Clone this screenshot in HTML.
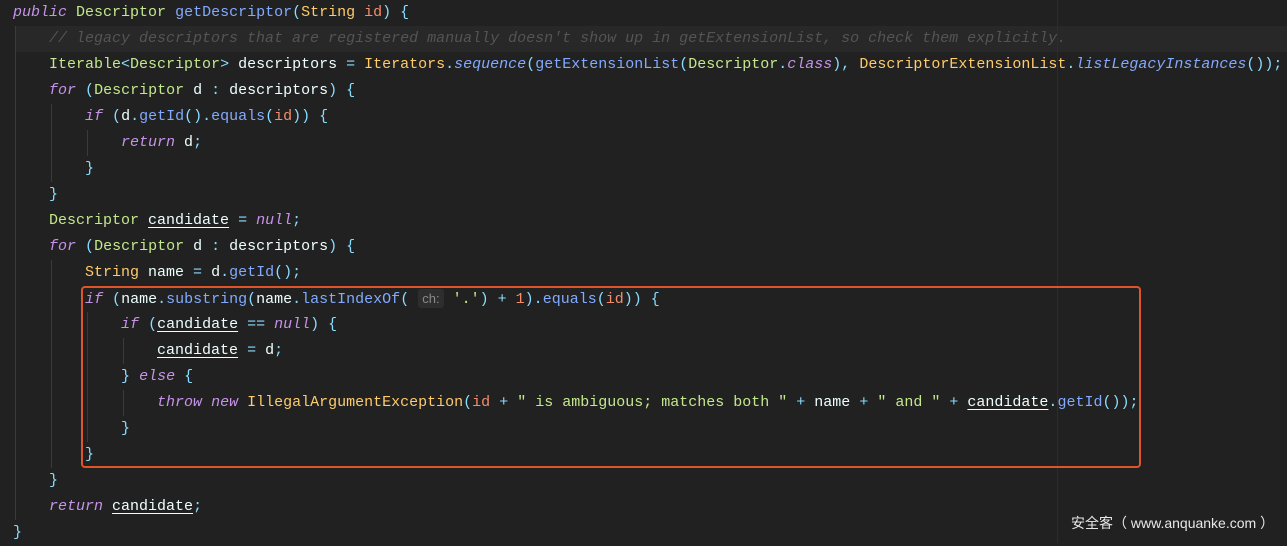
<!DOCTYPE html><html><head><meta charset="utf-8"><style>
body{margin:0;width:1287px;height:543px;background:#212121;overflow:hidden;position:relative;font-family:"Liberation Mono",monospace;font-size:15px;color:#eeffff}
.l{position:absolute;left:13px;height:26px;line-height:26px;white-space:pre}
.k{color:#c792ea;font-style:italic}.t{color:#c3e88d}.f{color:#82aaff}.p{color:#89ddff}.o{color:#f78c6c}.y{color:#ffcb6b}
.c{color:#545454;font-style:italic}.s{color:#c3e88d}.u{text-decoration:underline;text-underline-offset:3px}
.g{position:absolute;width:1px;background:#3a3a3a}
.hl{position:absolute;left:15px;top:26px;width:1272px;height:26px;background:#282828}
.box{position:absolute;left:81px;top:286px;width:1056px;height:178px;border:2px solid #e0542a;border-radius:4px}
.h{background:#2e2e2e;color:#8a8a8a;font-family:"Liberation Sans",sans-serif;font-size:13px;padding:2px 4px;border-radius:3px}
.wm{position:absolute;left:1071px;top:513px;color:#e8e8e8;font-family:"Liberation Sans","Noto Sans CJK SC",sans-serif;font-size:14px;white-space:pre}
</style></head><body>
<div class="hl"></div>
<div class="g" style="left:15px;top:26px;height:494px"></div>
<div class="g" style="left:51px;top:104px;height:78px"></div>
<div class="g" style="left:87px;top:130px;height:26px"></div>
<div class="g" style="left:51px;top:260px;height:208px"></div>
<div class="g" style="left:87px;top:312px;height:130px"></div>
<div class="g" style="left:123px;top:338px;height:26px"></div>
<div class="g" style="left:123px;top:390px;height:26px"></div>
<div class="g" style="left:1057px;top:0;height:543px;background:#2c2c2c"></div>
<div class="l" style="top:0"><span class="k">public</span> <span class="t">Descriptor</span> <span class="f">getDescriptor</span><span class="p">(</span><span class="y">String</span> <span class="o">id</span><span class="p">) {</span></div>
<div class="l" style="top:26px">    <span class="c">// legacy descriptors that are registered manually doesn't show up in getExtensionList, so check them explicitly.</span></div>
<div class="l" style="top:52px">    <span class="t">Iterable</span><span class="p">&lt;</span><span class="t">Descriptor</span><span class="p">&gt;</span> descriptors <span class="p">=</span> <span class="y">Iterators</span><span class="p">.</span><span class="f" style="font-style:italic">sequence</span><span class="p">(</span><span class="f">getExtensionList</span><span class="p">(</span><span class="t">Descriptor</span><span class="p">.</span><span class="k">class</span><span class="p">),</span> <span class="y">DescriptorExtensionList</span><span class="p">.</span><span class="f" style="font-style:italic">listLegacyInstances</span><span class="p">());</span></div>
<div class="l" style="top:78px">    <span class="k">for</span> <span class="p">(</span><span class="t">Descriptor</span> d <span class="p">:</span> descriptors<span class="p">) {</span></div>
<div class="l" style="top:104px">        <span class="k">if</span> <span class="p">(</span>d<span class="p">.</span><span class="f">getId</span><span class="p">().</span><span class="f">equals</span><span class="p">(</span><span class="o">id</span><span class="p">)) {</span></div>
<div class="l" style="top:130px">            <span class="k">return</span> d<span class="p">;</span></div>
<div class="l" style="top:156px">        <span class="p">}</span></div>
<div class="l" style="top:182px">    <span class="p">}</span></div>
<div class="l" style="top:208px">    <span class="t">Descriptor</span> <span class="u">candidate</span> <span class="p">=</span> <span class="k">null</span><span class="p">;</span></div>
<div class="l" style="top:234px">    <span class="k">for</span> <span class="p">(</span><span class="t">Descriptor</span> d <span class="p">:</span> descriptors<span class="p">) {</span></div>
<div class="l" style="top:260px">        <span class="y">String</span> name <span class="p">=</span> d<span class="p">.</span><span class="f">getId</span><span class="p">();</span></div>
<div class="l" style="top:286px">        <span class="k">if</span> <span class="p">(</span>name<span class="p">.</span><span class="f">substring</span><span class="p">(</span>name<span class="p">.</span><span class="f">lastIndexOf</span><span class="p">(</span> <span class="h">ch:</span> <span class="s">'.'</span><span class="p">)</span> <span class="p">+</span> <span class="o">1</span><span class="p">).</span><span class="f">equals</span><span class="p">(</span><span class="o">id</span><span class="p">)) {</span></div>
<div class="l" style="top:312px">            <span class="k">if</span> <span class="p">(</span><span class="u">candidate</span> <span class="p">==</span> <span class="k">null</span><span class="p">) {</span></div>
<div class="l" style="top:338px">                <span class="u">candidate</span> <span class="p">=</span> d<span class="p">;</span></div>
<div class="l" style="top:364px">            <span class="p">}</span> <span class="k">else</span> <span class="p">{</span></div>
<div class="l" style="top:390px">                <span class="k">throw</span> <span class="k">new</span> <span class="y">IllegalArgumentException</span><span class="p">(</span><span class="o">id</span> <span class="p">+</span> <span class="s">" is ambiguous; matches both "</span> <span class="p">+</span> name <span class="p">+</span> <span class="s">" and "</span> <span class="p">+</span> <span class="u">candidate</span><span class="p">.</span><span class="f">getId</span><span class="p">());</span></div>
<div class="l" style="top:416px">            <span class="p">}</span></div>
<div class="l" style="top:442px">        <span class="p">}</span></div>
<div class="l" style="top:468px">    <span class="p">}</span></div>
<div class="l" style="top:494px">    <span class="k">return</span> <span class="u">candidate</span><span class="p">;</span></div>
<div class="l" style="top:520px"><span class="p">}</span></div>
<div class="box"></div>
<div class="wm">安全客（ www.anquanke.com ）</div>
</body></html>
